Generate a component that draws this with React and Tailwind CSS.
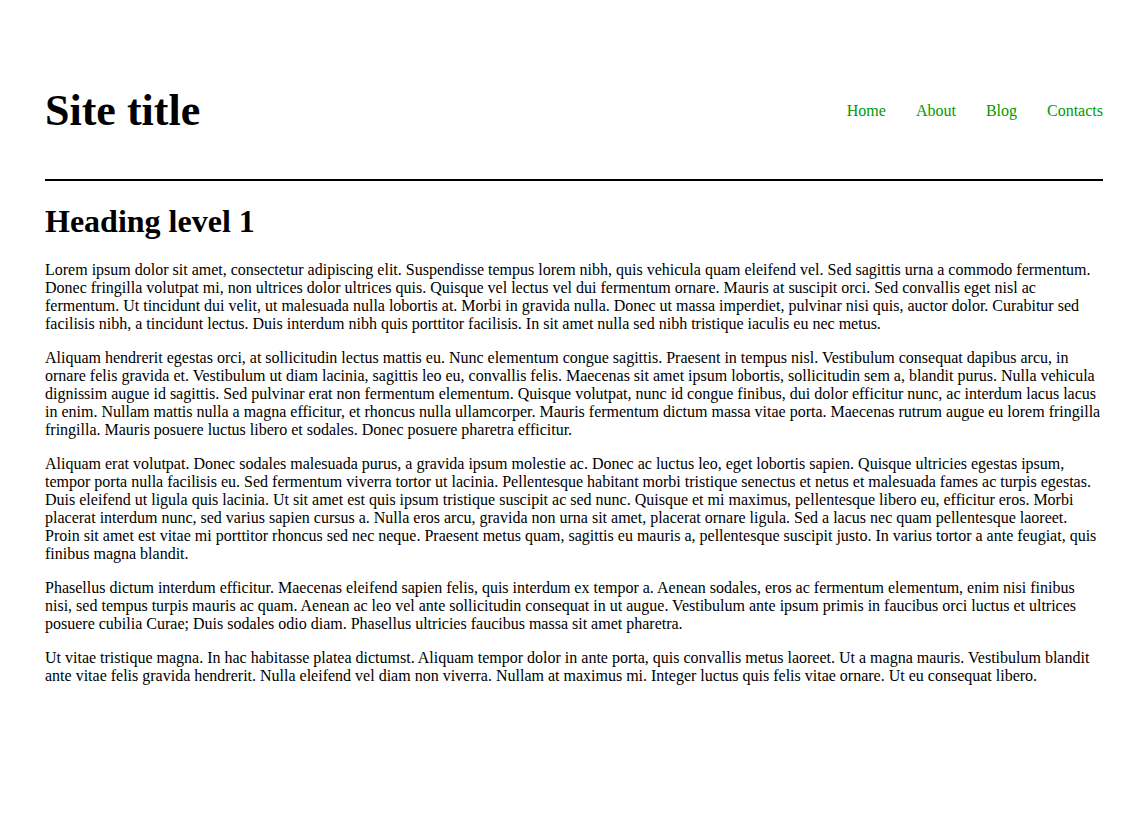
const paragraphs = [
  'Lorem ipsum dolor sit amet, consectetur adipiscing elit. Suspendisse tempus lorem nibh, quis vehicula quam eleifend vel. Sed sagittis urna a commodo fermentum. Donec fringilla volutpat mi, non ultrices dolor ultrices quis. Quisque vel lectus vel dui fermentum ornare. Mauris at suscipit orci. Sed convallis eget nisl ac fermentum. Ut tincidunt dui velit, ut malesuada nulla lobortis at. Morbi in gravida nulla. Donec ut massa imperdiet, pulvinar nisi quis, auctor dolor. Curabitur sed facilisis nibh, a tincidunt lectus. Duis interdum nibh quis porttitor facilisis. In sit amet nulla sed nibh tristique iaculis eu nec metus.',
  'Aliquam hendrerit egestas orci, at sollicitudin lectus mattis eu. Nunc elementum congue sagittis. Praesent in tempus nisl. Vestibulum consequat dapibus arcu, in ornare felis gravida et. Vestibulum ut diam lacinia, sagittis leo eu, convallis felis. Maecenas sit amet ipsum lobortis, sollicitudin sem a, blandit purus. Nulla vehicula dignissim augue id sagittis. Sed pulvinar erat non fermentum elementum. Quisque volutpat, nunc id congue finibus, dui dolor efficitur nunc, ac interdum lacus lacus in enim. Nullam mattis nulla a magna efficitur, et rhoncus nulla ullamcorper. Mauris fermentum dictum massa vitae porta. Maecenas rutrum augue eu lorem fringilla fringilla. Mauris posuere luctus libero et sodales. Donec posuere pharetra efficitur.',
  'Aliquam erat volutpat. Donec sodales malesuada purus, a gravida ipsum molestie ac. Donec ac luctus leo, eget lobortis sapien. Quisque ultricies egestas ipsum, tempor porta nulla facilisis eu. Sed fermentum viverra tortor ut lacinia. Pellentesque habitant morbi tristique senectus et netus et malesuada fames ac turpis egestas. Duis eleifend ut ligula quis lacinia. Ut sit amet est quis ipsum tristique suscipit ac sed nunc. Quisque et mi maximus, pellentesque libero eu, efficitur eros. Morbi placerat interdum nunc, sed varius sapien cursus a. Nulla eros arcu, gravida non urna sit amet, placerat ornare ligula. Sed a lacus nec quam pellentesque laoreet. Proin sit amet est vitae mi porttitor rhoncus sed nec neque. Praesent metus quam, sagittis eu mauris a, pellentesque suscipit justo. In varius tortor a ante feugiat, quis finibus magna blandit.',
  'Phasellus dictum interdum efficitur. Maecenas eleifend sapien felis, quis interdum ex tempor a. Aenean sodales, eros ac fermentum elementum, enim nisi finibus nisi, sed tempus turpis mauris ac quam. Aenean ac leo vel ante sollicitudin consequat in ut augue. Vestibulum ante ipsum primis in faucibus orci luctus et ultrices posuere cubilia Curae; Duis sodales odio diam. Phasellus ultricies faucibus massa sit amet pharetra.',
  'Ut vitae tristique magna. In hac habitasse platea dictumst. Aliquam tempor dolor in ante porta, quis convallis metus laoreet. Ut a magna mauris. Vestibulum blandit ante vitae felis gravida hendrerit. Nulla eleifend vel diam non viverra. Nullam at maximus mi. Integer luctus quis felis vitae ornare. Ut eu consequat libero.',
];

const navItems = ['Home', 'About', 'Blog', 'Contacts'];

export default function App() {
  return (
    <div className="min-h-screen bg-white text-black font-['Liberation_Serif','Times_New_Roman',serif] pl-[45px] pr-[40px]">
      {/* Header */}
      <header className="flex items-center justify-between pt-[83px] pb-[41px]">
        <h1 className="text-[44px] leading-[55px] font-bold">Site title</h1>
        <nav className="flex items-center gap-[30px] text-[16px] leading-[18px]">
          {navItems.map((item) => (
            <a key={item} href="#" className="text-[#009900]">
              {item}
            </a>
          ))}
        </nav>
      </header>
      <div className="h-[2px] bg-black" />

      {/* Content */}
      <main className="pt-[22px]">
        <h2 className="text-[32px] leading-[37px] font-bold mb-[21px]">Heading level 1</h2>
        {paragraphs.map((p, i) => (
          <p key={i} className="text-[16px] leading-[18px] mb-[16px]">
            {p}
          </p>
        ))}
      </main>
    </div>
  );
}
